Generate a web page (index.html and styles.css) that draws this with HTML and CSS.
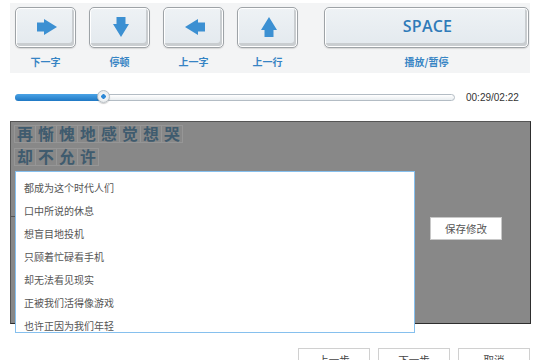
FILE: index.html
```html
<!DOCTYPE html>
<html lang="zh-CN">
<head>
<meta charset="utf-8">
<link rel="stylesheet" href="styles.css">
</head>
<body>
<div class="page">
  <div class="toolbar">
    <div class="col">
      <div class="key"><svg class="arrow" viewBox="0 0 20 16" width="20" height="16"><path d="M0 3.5H7V0L20 8L7 16V12.5H0Z"/></svg></div>
      <div class="label">下一字</div>
    </div>
    <div class="col">
      <div class="key"><svg class="arrow down" viewBox="0 0 20 16" width="20" height="16"><path d="M0 3.5H7V0L20 8L7 16V12.5H0Z"/></svg></div>
      <div class="label">停顿</div>
    </div>
    <div class="col">
      <div class="key"><svg class="arrow left" viewBox="0 0 20 16" width="20" height="16"><path d="M0 3.5H7V0L20 8L7 16V12.5H0Z"/></svg></div>
      <div class="label">上一字</div>
    </div>
    <div class="col">
      <div class="key"><svg class="arrow up" viewBox="0 0 20 16" width="20" height="16"><path d="M0 3.5H7V0L20 8L7 16V12.5H0Z"/></svg></div>
      <div class="label">上一行</div>
    </div>
    <div class="col wide">
      <div class="key space">SPACE</div>
      <div class="label">播放/暂停</div>
    </div>
  </div>

  <div class="progress">
    <div class="track">
      <div class="fill"></div>
      <div class="knob"></div>
    </div>
    <div class="time">00:29/02:22</div>
  </div>

  <div class="panel">
    <div class="chars">
      <span>再</span><span>惭</span><span>愧</span><span>地</span><span>感</span><span>觉</span><span>想</span><span>哭</span>
    </div>
    <div class="chars">
      <span>却</span><span>不</span><span>允</span><span>许</span>
    </div>
    <div class="edit-row">
      <div class="input"></div>
      <div class="save">保存修改</div>
    </div>
    <ul class="dropdown">
      <li>都成为这个时代人们</li>
      <li>口中所说的休息</li>
      <li>想盲目地投机</li>
      <li>只顾着忙碌看手机</li>
      <li>却无法看见现实</li>
      <li>正被我们活得像游戏</li>
      <li>也许正因为我们年轻</li>
    </ul>
  </div>

  <div class="footer">
    <div class="btn">上一步</div>
    <div class="btn">下一步</div>
    <div class="btn">取消</div>
  </div>
</div>
</body>
</html>
```

FILE: styles.css
```css
html, body {
  margin: 0;
  padding: 0;
  background: #ffffff;
  width: 540px;
  height: 360px;
  overflow: hidden;
  font-family: "Noto Sans CJK SC", "Noto Sans", sans-serif;
}

.page {
  position: relative;
  padding-top: 3px;
}

.toolbar {
  margin-left: 10px;
  width: 520px;
  height: 70px;
  box-sizing: border-box;
  background: #f3f4f5;
  padding: 4px 0 0 5px;
  display: flex;
  gap: 13px;
}

.col {
  display: flex;
  flex-direction: column;
  align-items: center;
  width: 61px;
}

.col.wide {
  width: 205px;
  margin-left: 13px;
}

.key {
  width: 100%;
  height: 41px;
  box-sizing: border-box;
  border: 1px solid #9ea3a7;
  border-radius: 5px;
  background: linear-gradient(#eef2f5, #e3e9ee);
  box-shadow: inset 0 0 0 1px #ffffff, inset -2px -3px 0 1px #c9cdd0, 0 1px 1px #d8d8d8;
  display: flex;
  align-items: center;
  justify-content: center;
  padding: 1px 0 2px 2px;
}

.arrow path {
  fill: #3c90d2;
}

.arrow.down { transform: rotate(90deg); }
.arrow.left { transform: rotate(180deg); }
.arrow.up { transform: rotate(-90deg); }

.key.space {
  font-family: "Open Sans", "Noto Sans", sans-serif;
  font-size: 16px;
  font-weight: 600;
  color: #2f7bb9;
  letter-spacing: 0.2px;
  padding: 0 0 3px 2px;
}

.label {
  margin-top: 7px;
  font-size: 10px;
  line-height: 14px;
  font-weight: 700;
  color: #3684c4;
}

.progress {
  display: flex;
  align-items: center;
  height: 16px;
  margin-top: 16px;
  padding-left: 15px;
}

.track {
  position: relative;
  width: 440px;
  height: 7px;
  box-sizing: border-box;
  border: 1px solid #b3bcc4;
  border-radius: 4px;
  background: linear-gradient(#ffffff, #e9edf0);
}

.fill {
  position: absolute;
  left: -1px;
  top: -1px;
  width: 90px;
  height: 7px;
  border-radius: 4px 0 0 4px;
  background: linear-gradient(#4aa3e6, #1f78c4);
}

.knob {
  position: absolute;
  left: 81px;
  top: -5px;
  width: 13px;
  height: 13px;
  box-sizing: border-box;
  border-radius: 50%;
  border: 1px solid #b8bfc4;
  background: radial-gradient(circle, #2c88d6 0 2px, #f3f5f6 2.5px, #dfe3e6 100%);
  box-shadow: 0 1px 1px rgba(0,0,0,0.2);
}

.time {
  margin-left: 11px;
  font-family: "Liberation Sans", sans-serif;
  font-size: 10px;
  color: #333333;
}

.panel {
  position: relative;
  margin: 16px 0 0 10px;
  width: 521px;
  height: 203px;
  box-sizing: border-box;
  background: #888888;
  border: 1px solid #2e2e2e;
  border-left-color: #555555;
  border-top-color: #555555;
  padding: 3px 0 0 3px;
}

.chars {
  display: flex;
  width: max-content;
  height: 18px;
  margin-bottom: 5px;
  border-right: 1px solid #969696;
}

.chars span {
  width: 20px;
  height: 16px;
  border: 1px solid #969696;
  border-right: none;
  font-size: 15.8px;
  line-height: 16px;
  font-weight: 700;
  text-align: center;
  color: #3f5b6e;
}

.edit-row {
  display: flex;
  align-items: center;
  margin-top: 50px;
  margin-left: -3px;
}

.input {
  width: 404px;
  height: 24px;
  box-sizing: border-box;
  border-top: 1px solid #555;
  border-right: 2px solid #2f5f86;
}

.save {
  margin-left: 15px;
  width: 72px;
  height: 23px;
  box-sizing: border-box;
  background: #ffffff;
  border: 1px solid #c8c8c8;
  font-size: 10.5px;
  line-height: 21px;
  text-align: center;
  color: #555555;
}

.dropdown {
  position: absolute;
  left: 4px;
  top: 49px;
  width: 400px;
  height: 162px;
  box-sizing: border-box;
  margin: 0;
  padding: 4px 0 0 0;
  list-style: none;
  background: #ffffff;
  border: 1px solid #86c0ee;
  overflow: hidden;
}

.dropdown li {
  height: 23px;
  line-height: 23px;
  padding-left: 8px;
  font-size: 10px;
  color: #555555;
}

.footer {
  display: flex;
  justify-content: flex-end;
  gap: 8px;
  margin-top: 24px;
  padding-right: 10px;
}

.btn {
  width: 72px;
  height: 24px;
  box-sizing: border-box;
  border: 1px solid #d0d0d0;
  background: #ffffff;
  font-size: 10.5px;
  line-height: 22px;
  text-align: center;
  color: #444444;
}
```
